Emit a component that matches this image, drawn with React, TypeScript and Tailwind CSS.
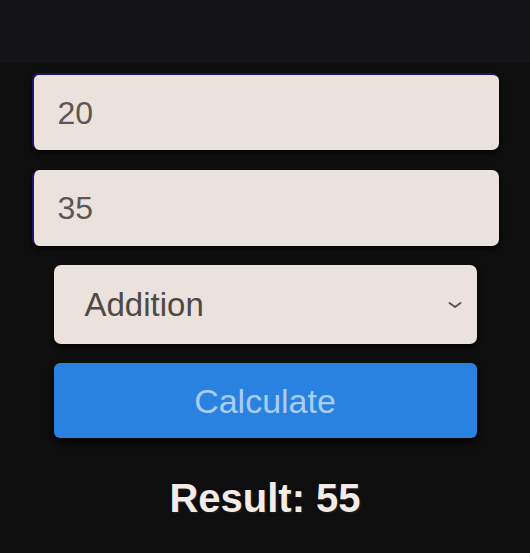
import React from "react";

export default function App() {
  return (
    <div
      className="w-[530px] h-[553px] flex flex-col bg-[#0f0f10] overflow-hidden"
      style={{ fontFamily: '"Liberation Sans", Arial, sans-serif' }}
    >
      <div className="h-[63px] bg-[#131318] shrink-0" />
      <div className="flex flex-col items-center pt-[10px]">
        <div className="w-[467px] h-[77px] rounded-[7px] bg-[#ebe2de] flex items-center pl-[24px] shadow-[0_3px_6px_rgba(0,0,0,0.8)] border-l-2 border-t-2 border-[#1d1470]">
          <span className="text-[32px] text-[#5c5753] leading-none">20</span>
        </div>
        <div className="mt-[20px] w-[467px] h-[76px] rounded-[7px] bg-[#ebe2de] flex items-center pl-[24px] shadow-[0_3px_6px_rgba(0,0,0,0.8)] border-l-2 border-[#1d1470]">
          <span className="text-[32px] text-[#5c5753] leading-none">35</span>
        </div>
        <div className="mt-[19px] w-[423px] h-[79px] rounded-[7px] bg-[#ebe2de] flex items-center justify-between pl-[31px] pr-[14px] shadow-[0_3px_6px_rgba(0,0,0,0.8)]">
          <span className="text-[33px] text-[#4e4945] leading-none">Addition</span>
          <svg width="16" height="10" viewBox="0 0 16 10" fill="none">
            <path d="M2.5 3 L8 7 L13.5 3" stroke="#5a5550" strokeWidth="2" strokeLinecap="round" strokeLinejoin="round" />
          </svg>
        </div>
        <div className="mt-[19px] w-[423px] h-[75px] rounded-[6px] bg-[#2a82e0] flex items-center justify-center shadow-[0_4px_8px_rgba(0,0,0,0.9)]">
          <span className="text-[34px] text-[#a9cdf2] leading-none">Calculate</span>
        </div>
        <div className="mt-[40px] text-[40px] font-bold text-[#f2ebe7] leading-none [text-shadow:0_0_3px_#000,1px_1px_2px_#3a302a]">
          Result: 55
        </div>
      </div>
    </div>
  );
}
